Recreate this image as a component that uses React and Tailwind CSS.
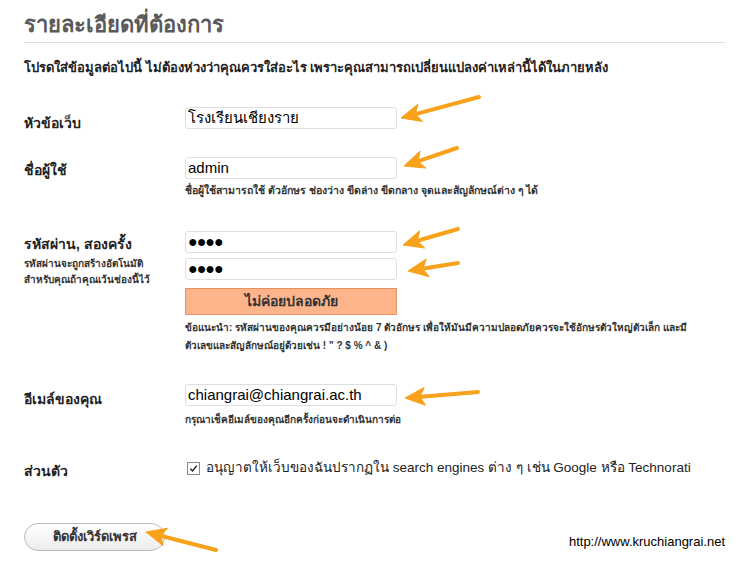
import React from "react";

// orange call-out arrows drawn over the form
const arrows = [
  [479, 97, 401, 118],
  [457, 148, 404, 166],
  [458, 229, 403, 245],
  [458, 263, 408, 271],
  [478, 392, 405, 398],
  [216, 550, 146, 532],
];

function Arrows() {
  return (
    <svg className="pointer-events-none absolute left-0 top-0" width="745" height="563">
      {arrows.map(([x1, y1, x2, y2], i) => {
        const dx = x2 - x1;
        const dy = y2 - y1;
        const len = Math.hypot(dx, dy);
        const ux = dx / len;
        const uy = dy / len;
        const bx = x2 - ux * 20;
        const by = y2 - uy * 20;
        const px = -uy * 9;
        const py = ux * 9;
        return (
          <g key={i} fill="#f8a21c" stroke="#f8a21c">
            <line x1={x1} y1={y1} x2={bx + ux * 4} y2={by + uy * 4} strokeWidth="4" strokeLinecap="round" />
            <polygon
              points={`${x2},${y2} ${bx + px},${by + py} ${bx + ux * 5},${by + uy * 5} ${bx - px},${by - py}`}
              strokeWidth="1"
              strokeLinejoin="round"
            />
          </g>
        );
      })}
    </svg>
  );
}

const font = { fontFamily: "Tahoma, 'Liberation Sans', 'Noto Sans', sans-serif" };

function Field({ value }) {
  return (
    <input
      readOnly
      type="text"
      value={value}
      className="block h-[22px] w-[212px] rounded-[3px] border border-[#dfdfdf] bg-white px-[2px] text-[15px] text-black outline-none"
      style={font}
    />
  );
}

function PasswordField() {
  return (
    <div className="flex h-[22px] w-[212px] items-center rounded-[3px] border border-[#dfdfdf] bg-white px-[2px] text-[16px] leading-none tracking-[-1px] text-black">
      ●●●●
    </div>
  );
}

export default function App() {
  return (
    <div className="relative h-[563px] w-[745px] overflow-hidden bg-white px-6 text-[#222]" style={font}>
      <h1 className="pt-[10px] text-[22px] font-semibold leading-[30px] text-[#595959]">รายละเอียดที่ต้องการ</h1>
      <div className="mt-[2px] h-px w-[701px] bg-[#dcdcdc]" />
      <p className="mt-[16px] text-[13px] font-bold leading-[18px] text-[#222]">
        โปรดใส่ข้อมูลต่อไปนี้ ไม่ต้องห่วงว่าคุณควรใส่อะไร เพราะคุณสามารถเปลี่ยนแปลงค่าเหล่านี้ได้ในภายหลัง
      </p>

      {/* site title */}
      <div className="mt-[30px] flex">
        <div className="w-[161px] shrink-0 pt-[6px] text-[14px] font-bold leading-[20px]">หัวข้อเว็บ</div>
        <Field value="โรงเรียนเชียงราย" />
      </div>

      {/* username */}
      <div className="mt-[24px] flex">
        <div className="w-[161px] shrink-0 pt-[3px] text-[14px] font-bold leading-[20px]">ชื่อผู้ใช้</div>
        <div>
          <Field value="admin" />
          <p className="mt-[3px] text-[10.5px] font-bold leading-[16px] text-[#333]">
            ชื่อผู้ใช้สามารถใช้ ตัวอักษร ช่องว่าง ขีดล่าง ขีดกลาง จุดและสัญลักษณ์ต่าง ๆ ได้
          </p>
        </div>
      </div>

      {/* password */}
      <div className="mt-[33px] flex">
        <div className="w-[161px] shrink-0 pt-[3px]">
          <div className="text-[14px] font-bold leading-[20px]">รหัสผ่าน, สองครั้ง</div>
          <div className="mt-[2px] whitespace-nowrap text-[10px] font-bold leading-[16px] text-[#333]">
            รหัสผ่านจะถูกสร้างอัตโนมัติ
            <br />
            สำหรับคุณถ้าคุณเว้นช่องนี้ไว้
          </div>
        </div>
        <div>
          <PasswordField />
          <div className="mt-[5px]">
            <PasswordField />
          </div>
          <div className="mt-[8px] flex h-[27px] w-[212px] items-center justify-center border border-[#e8935f] bg-[#fdb48b] text-[14px] font-bold text-[#333]">
            ไม่ค่อยปลอดภัย
          </div>
          <p className="mt-[4px] whitespace-nowrap text-[10px] font-bold leading-[18px] text-[#333]">
            ข้อแนะนำ: รหัสผ่านของคุณควรมีอย่างน้อย 7 ตัวอักษร เพื่อให้มันมีความปลอดภัยควรจะใช้อักษรตัวใหญ่ตัวเล็ก และมี
            <br />
            ตัวเลขและสัญลักษณ์อยู่ด้วยเช่น ! " ? $ % ^ &amp; )
          </p>
        </div>
      </div>

      {/* email */}
      <div className="mt-[29px] flex">
        <div className="w-[161px] shrink-0 pt-[5px] text-[14px] font-bold leading-[20px]">อีเมล์ของคุณ</div>
        <div>
          <Field value="chiangrai@chiangrai.ac.th" />
          <p className="mt-[6px] text-[10px] font-bold leading-[16px] text-[#333]">
            กรุณาเช็คอีเมล์ของคุณอีกครั้งก่อนจะดำเนินการต่อ
          </p>
        </div>
      </div>

      {/* privacy */}
      <div className="mt-[27px] flex">
        <div className="w-[161px] shrink-0 pt-[6px] text-[14px] font-bold leading-[20px]">ส่วนตัว</div>
        <label className="flex items-center gap-[6px] pl-[2px] text-[13.5px] leading-[18px] text-[#222]">
          <span className="flex h-[13px] w-[13px] items-center justify-center border border-[#8a8a8a] bg-white">
            <svg width="9" height="9" viewBox="0 0 10 10">
              <path d="M1.5 5.2 L4 7.8 L8.6 1.8" fill="none" stroke="#222" strokeWidth="1.6" />
            </svg>
          </span>
          อนุญาตให้เว็บของฉันปรากฏใน search engines ต่าง ๆ เช่น Google หรือ Technorati
        </label>
      </div>

      {/* footer */}
      <div className="mt-[41px] flex items-center justify-between">
        <button
          className="h-[28px] w-[141px] rounded-full border border-[#bbbbbb] bg-gradient-to-b from-white to-[#ececec] text-[13px] font-bold text-[#333]"
          style={font}
        >
          ติดตั้งเวิร์ดเพรส
        </button>
        <span className="mr-[-4px] mt-[10px] text-[13px] text-black" style={{ fontFamily: "'Liberation Sans Narrow', 'Liberation Sans', Arial, sans-serif" }}>
          http://www.kruchiangrai.net
        </span>
      </div>

      <Arrows />
    </div>
  );
}
